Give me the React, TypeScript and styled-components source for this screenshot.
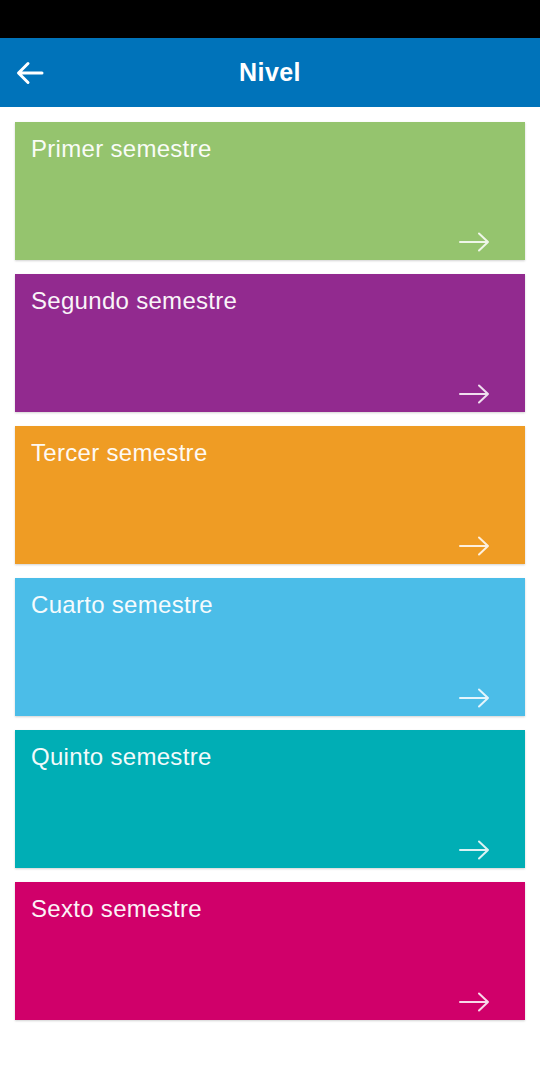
import React from 'react';
import styled, { createGlobalStyle } from 'styled-components';

const GlobalStyle = createGlobalStyle`
  html, body {
    margin: 0;
    padding: 0;
    background: #ffffff;
  }
  body {
    font-family: 'Liberation Sans', Arial, sans-serif;
  }
`;

const Screen = styled.div`
  width: 540px;
  min-height: 1080px;
  background: #ffffff;
  display: flex;
  flex-direction: column;
`;

const StatusBar = styled.div`
  height: 38px;
  background: #000000;
`;

const AppBar = styled.header`
  height: 69px;
  background: #0073ba;
  position: relative;
  display: flex;
  align-items: center;
  justify-content: center;
`;

const BackButton = styled.button`
  position: absolute;
  left: 12px;
  top: 50%;
  transform: translateY(-50%);
  width: 36px;
  height: 36px;
  border: none;
  background: transparent;
  padding: 0;
  display: flex;
  align-items: center;
  justify-content: center;
  color: #ffffff;
`;

const Title = styled.h1`
  margin: 0;
  color: #ffffff;
  font-family: 'Liberation Sans', Arial, sans-serif;
  font-size: 25px;
  letter-spacing: 0.4px;
  font-weight: 700;
`;

const List = styled.div`
  display: flex;
  flex-direction: column;
  gap: 14px;
  padding: 15px 15px 0;
`;

const Card = styled.div<{ $bg: string }>`
  height: 138px;
  box-sizing: border-box;
  background: ${({ $bg }) => $bg};
  padding: 15px 16px 0;
  display: flex;
  flex-direction: column;
  justify-content: space-between;
  box-shadow: 0 1px 2px rgba(0, 0, 0, 0.18);
`;

const CardTitle = styled.span`
  color: #ffffff;
  font-family: 'Liberation Sans', Arial, sans-serif;
  font-size: 24px;
  line-height: 24px;
  letter-spacing: 0.3px;
  font-weight: 400;
  opacity: 0.95;
`;

const ArrowRow = styled.div`
  display: flex;
  justify-content: flex-end;
  padding: 0 19px 8px 0;
`;

const semesters = [
  { label: 'Primer semestre', color: '#95c46e' },
  { label: 'Segundo semestre', color: '#922a8f' },
  { label: 'Tercer semestre', color: '#ef9c24' },
  { label: 'Cuarto semestre', color: '#4bbde8' },
  { label: 'Quinto semestre', color: '#00aeb5' },
  { label: 'Sexto semestre', color: '#d0006a' },
];

const ForwardArrow = () => (
  <svg width="31" height="20" viewBox="0 0 31 20" fill="none">
    <path
      d="M1 10 H29 M20 1.5 L29 10 L20 18.5"
      stroke="rgba(255,255,255,0.85)"
      strokeWidth="2"
      strokeLinecap="round"
      strokeLinejoin="round"
    />
  </svg>
);

export default function App() {
  return (
    <>
      <GlobalStyle />
      <Screen>
        <StatusBar />
        <AppBar>
          <BackButton aria-label="Volver">
            <svg width="28" height="24" viewBox="0 0 28 24" fill="none">
              <path
                d="M26 12 H3 M12 2.5 L2.5 12 L12 21.5"
                stroke="#ffffff"
                strokeWidth="3"
                strokeLinecap="round"
                strokeLinejoin="round"
              />
            </svg>
          </BackButton>
          <Title>Nivel</Title>
        </AppBar>
        <List>
          {semesters.map((s) => (
            <Card key={s.label} $bg={s.color}>
              <CardTitle>{s.label}</CardTitle>
              <ArrowRow>
                <ForwardArrow />
              </ArrowRow>
            </Card>
          ))}
        </List>
      </Screen>
    </>
  );
}
